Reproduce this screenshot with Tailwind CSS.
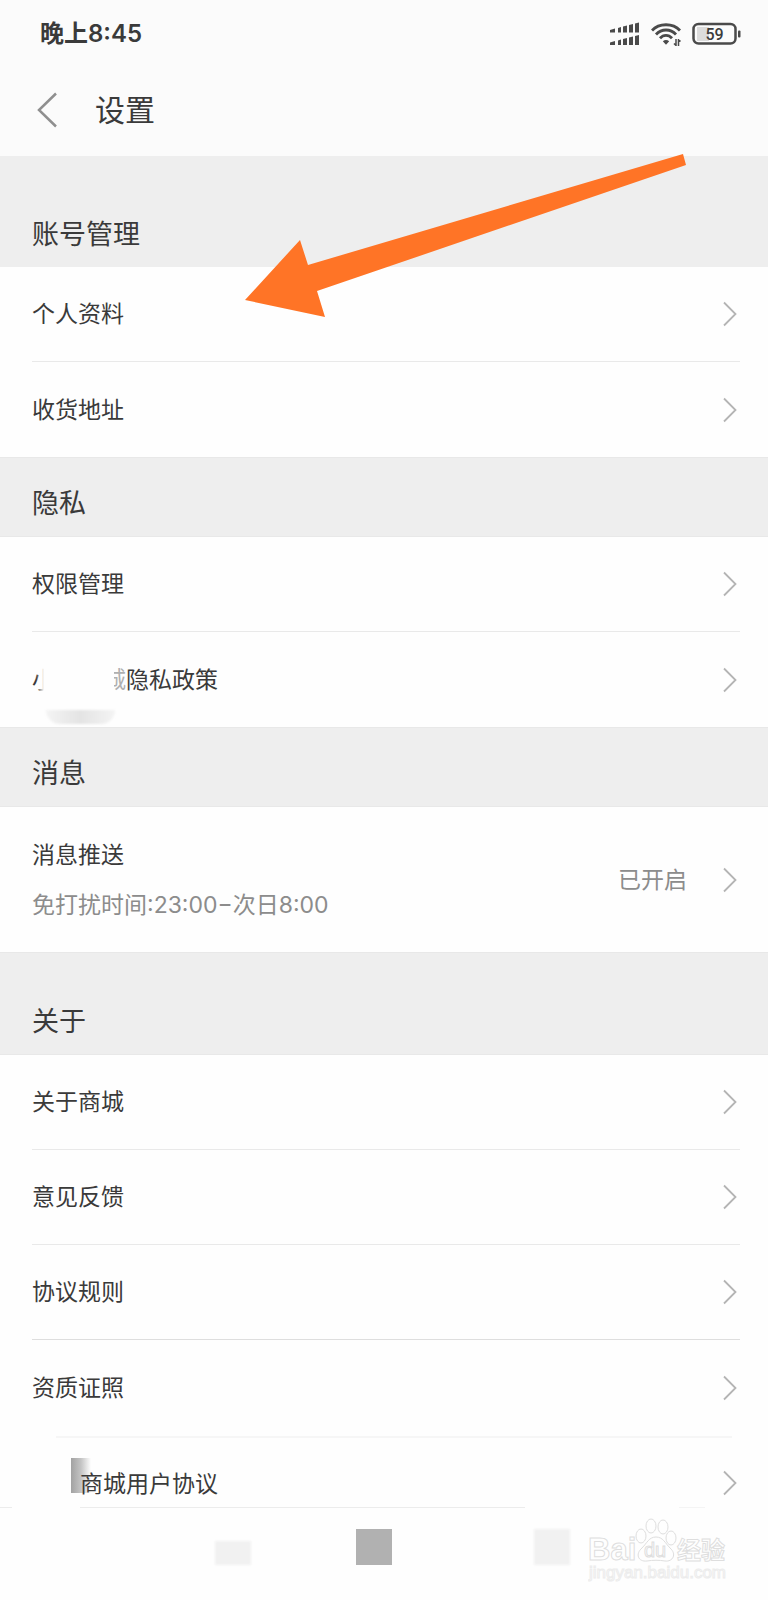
<!DOCTYPE html>
<html lang="zh-CN">
<head>
    <meta charset="UTF-8">
    <meta name="viewport" content="width=device-width, initial-scale=1.0">
    <title>设置</title>
    <script src="https://cdn.jsdelivr.net/npm/@tailwindcss/browser@4"></script>
</head>
<body class="relative bg-[#fefefe] font-['Inter','Noto_Sans_CJK_SC',sans-serif] text-[23px] leading-[40px] text-[#3a3a3a]">

    <!-- Chevron shared by the rows -->
    <svg class="hidden">
        <symbol id="chevron" viewBox="0 0 14 26">
            <path d="M1 1.5 L12.5 13 L1 24.5" fill="none" stroke="#b4b4b4" stroke-width="1.8"/>
        </symbol>
    </svg>

    <!-- Header -->
    <header class="bg-[#fbfbfb] h-[156px]">
        <div class="flex items-center justify-between pl-10 pr-[26px] pt-[14px]">
            <div class="text-[24px] font-semibold">晚上8:45</div>
            <div class="flex items-center gap-[11px]">
                <svg class="w-[30px] h-6" viewBox="0 0 30 24" fill="#4a4a4a">
                    <path d="M0 8l5-1.500v4H0zM8 6l3-1v5.500H8zM13 4.500l4-1v7h-4zM19 3l4-1v8.500h-4zM25 1.500l4-1v10h-4z"/>
                    <path d="M0 20.500l5-1.500v4H0zM8 18.500l3-1v5.500H8zM13 17l4-1v7h-4zM19 15.500l4-1v8.500h-4zM25 14l4-1v10h-4z"/>
                </svg>
                <svg class="w-[30px] h-6" viewBox="0 0 30 24" fill="none" stroke="#4a4a4a" stroke-width="2.800">
                    <path d="M1 8.500C8 .8 22 .8 29 8.500"/>
                    <path d="M5 12.500C10.500 6.500 19.500 6.500 25 12.500"/>
                    <path d="M9 16.200C12.500 12.300 17.500 12.300 21 16.200"/>
                    <path d="M11.800 19.300Q15 16.800 18.200 19.300L15 22.800z" fill="#4a4a4a" stroke="none"/>
                    <path d="M25 17v7M23 21.500l2 2M27.500 24v-7M29.500 19.500l-2-2" stroke-width="1.500"/>
                </svg>
                <svg class="w-[50px] h-6" viewBox="0 0 50 24">
                    <rect x="5" y="5" width="12" height="14" fill="#dcdcdc"/>
                    <rect x="1.500" y="2" width="42" height="19.500" rx="5" fill="none" stroke="#4a4a4a" stroke-width="2.500"/>
                    <rect x="46" y="8.500" width="2.500" height="7" rx="1" fill="#4a4a4a"/>
                    <text x="22.500" y="17.500" text-anchor="middle" font-family="Roboto" font-size="16" font-weight="500" fill="#3c3c3c">59</text>
                </svg>
            </div>
        </div>
        <div class="flex items-center gap-[38px] pl-9 pt-9">
            <button type="button" aria-label="返回">
                <svg class="w-[21px] h-9" viewBox="0 0 21 36" fill="none" stroke="#8f8f8f" stroke-width="2.500">
                    <path d="M20 1.500L3 18L20 34.500"/>
                </svg>
            </button>
            <h1 class="text-[30px]">设置</h1>
        </div>
    </header>

    <main>
        <!-- Account -->
        <section>
            <h2 class="bg-[#eee] px-8 pt-[59px] pb-[12px] text-[27px]">账号管理</h2>
            <a href="#" class="flex h-[95px] items-center justify-between ml-8 mr-7 pr-[3px] border-b border-[#e9e9e9]">
                个人资料
                <svg class="w-[14px] h-[26px]"><use href="#chevron"/></svg>
            </a>
            <a href="#" class="flex h-[95px] items-center justify-between ml-8 mr-7 pr-[3px]">
                收货地址
                <svg class="w-[14px] h-[26px]"><use href="#chevron"/></svg>
            </a>
        </section>

        <!-- Privacy -->
        <section>
            <h2 class="bg-[#eee] border-y border-[#e8e8e8] px-8 pt-[26px] pb-[12px] text-[27px]">隐私</h2>
            <a href="#" class="flex h-[95px] items-center justify-between ml-8 mr-7 pr-[3px] border-b border-[#e9e9e9]">
                权限管理
                <svg class="w-[14px] h-[26px]"><use href="#chevron"/></svg>
            </a>
            <a href="#" class="relative flex h-[95px] items-center justify-between ml-8 mr-7 pr-[3px]">
                <span class="flex">小<span class="w-[48px]"></span><span class="text-[#b0b0b0]">城</span>隐私政策</span>
                <svg class="w-[14px] h-[26px]"><use href="#chevron"/></svg>
                <span class="absolute left-1 top-6 h-12 w-2 bg-linear-to-r from-[#fefefe]/0 to-[#fefefe]"></span>
                <span class="absolute left-3 top-6 h-12 w-[70px] bg-[#fefefe]"></span>
                <span class="absolute left-[14px] top-[78px] h-[14px] w-[69px] rounded-b-[35px] bg-linear-to-r from-[#f4f4f4] via-[#e4e4e4] to-[#f4f4f4] blur-[1px]"></span>
            </a>
        </section>

        <!-- Messages -->
        <section>
            <h2 class="bg-[#eee] border-y border-[#e8e8e8] px-8 pt-[26px] pb-[12px] text-[27px]">消息</h2>
            <a href="#" class="flex h-[145px] items-center justify-between ml-8 mr-7 pr-[3px]">
                <span class="flex flex-col gap-[10px]">
                    <span>消息推送</span>
                    <span class="text-[#8c8c8c]">免打扰时间:23:00−次日8:00</span>
                </span>
                <span class="flex items-center gap-[36px] text-[#8c8c8c]">
                    已开启
                    <svg class="w-[14px] h-[26px]"><use href="#chevron"/></svg>
                </span>
            </a>
        </section>

        <!-- About -->
        <section>
            <h2 class="bg-[#eee] border-y border-[#e8e8e8] px-8 pt-[49px] pb-[12px] text-[27px]">关于</h2>
            <a href="#" class="flex h-[95px] items-center justify-between ml-8 mr-7 pr-[3px] border-b border-[#e9e9e9]">
                关于商城
                <svg class="w-[14px] h-[26px]"><use href="#chevron"/></svg>
            </a>
            <a href="#" class="flex h-[95px] items-center justify-between ml-8 mr-7 pr-[3px] border-b border-[#e9e9e9]">
                意见反馈
                <svg class="w-[14px] h-[26px]"><use href="#chevron"/></svg>
            </a>
            <a href="#" class="flex h-[95px] items-center justify-between ml-8 mr-7 pr-[3px] border-b border-[#dedede]">
                协议规则
                <svg class="w-[14px] h-[26px]"><use href="#chevron"/></svg>
            </a>
            <a href="#" class="flex h-24 items-center justify-between ml-8 mr-7 pr-[3px]">
                资质证照
                <svg class="w-[14px] h-[26px]"><use href="#chevron"/></svg>
            </a>
            <div class="ml-14 mr-9 border-t-2 border-[#f6f6f6]"></div>
            <a href="#" class="relative flex h-[69px] items-start justify-between ml-8 mr-7 pr-[3px] pt-[26px]">
                <span class="absolute left-[39px] top-5 h-[35px] w-5 bg-linear-to-r from-[#a2a2a2] via-[#c4c4c4] to-transparent"></span>
                <span class="relative pl-12">商城用户协议</span>
                <svg class="w-[14px] h-[26px] mt-[6px]"><use href="#chevron"/></svg>
            </a>
        </section>
    </main>

    <!-- Navigation bar -->
    <footer class="h-[93px]">
        <div class="flex">
            <div class="w-3 border-t border-[#ececec]"></div>
            <div class="ml-[68px] w-[58%] border-t border-[#ececec]"></div>
            <div class="ml-[20%] w-[26px] border-t border-[#f4f4f4]"></div>
        </div>
        <div class="flex items-end pl-[28%] pt-[21px]">
            <div class="h-6 w-9 bg-[#f1f1f1] blur-[1px]"></div>
            <div class="ml-[105px] size-9 bg-[#b1b1b1]"></div>
            <div class="ml-[142px] size-9 bg-[#f1f1f1] blur-[1px]"></div>
        </div>
    </footer>

    <!-- Watermark -->
    <svg class="absolute right-9 top-[1514px] w-[144px] h-[72px]" viewBox="0 0 144 72" fill="#fefefe" stroke="#dedede" stroke-width="1">
        <g font-family="Liberation Sans, Noto Sans CJK SC" font-weight="700">
            <text x="0" y="46" font-size="31">Bai</text>
            <ellipse cx="53" cy="22" rx="5" ry="7"/>
            <ellipse cx="63" cy="12" rx="5" ry="7"/>
            <ellipse cx="75" cy="13" rx="5" ry="7"/>
            <ellipse cx="83" cy="24" rx="5" ry="7"/>
            <path d="M68 23C75 23 77 29 82 34C89 40 85 48 77 47C71 46 65 46 59 47C50 48 47 40 54 34C59 29 61 23 68 23Z"/>
            <text x="56" y="43" font-size="20" font-weight="400">du</text>
            <text x="89" y="45" font-size="24">经验</text>
        </g>
        <text x="1" y="64" font-family="Liberation Sans" font-size="17" stroke="#ececec">jingyan.baidu.com</text>
    </svg>

    <!-- Arrow pointing at the profile row -->
    <svg class="absolute left-[245px] top-[153px] w-[442px] h-[166px]" viewBox="245 153 442 166">
        <path d="M245 300L300 240L308 265L683 154L686 165L317 291L325 317Z" fill="#ff7426"/>
    </svg>

</body>
</html>
